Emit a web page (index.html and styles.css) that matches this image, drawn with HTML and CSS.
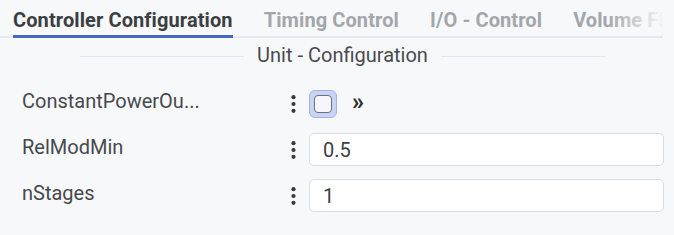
FILE: index.html
```html
<!DOCTYPE html>
<html lang="en">
<head>
<meta charset="utf-8">
<title>Controller Configuration</title>
<link rel="stylesheet" href="styles.css">
</head>
<body>
<div class="page">
  <div class="tabs-wrap">
    <nav class="tabs">
      <div class="tab active">Controller Configuration</div>
      <div class="tab">Timing Control</div>
      <div class="tab">I/O - Control</div>
      <div class="tab">Volume Flow</div>
    </nav>
    <div class="fade"></div>
  </div>

  <div class="section-title">
    <span class="line"></span>
    <span class="section-text">Unit - Configuration</span>
    <span class="line"></span>
  </div>

  <div class="rows">
    <div class="row">
      <div class="label">ConstantPowerOu...</div>
      <div class="kebab">
        <svg width="5" height="18" viewBox="0 0 5 18"><circle cx="2.5" cy="2.2" r="2.1"/><circle cx="2.5" cy="9" r="2.1"/><circle cx="2.5" cy="15.8" r="2.1"/></svg>
      </div>
      <div class="field check-field">
        <span class="check-ring"><input type="checkbox" class="check"></span>
        <span class="more">&raquo;</span>
      </div>
    </div>
    <div class="row">
      <div class="label">RelModMin</div>
      <div class="kebab">
        <svg width="5" height="18" viewBox="0 0 5 18"><circle cx="2.5" cy="2.2" r="2.1"/><circle cx="2.5" cy="9" r="2.1"/><circle cx="2.5" cy="15.8" r="2.1"/></svg>
      </div>
      <div class="field"><input class="text-input" type="text" value="0.5"></div>
    </div>
    <div class="row">
      <div class="label">nStages</div>
      <div class="kebab">
        <svg width="5" height="18" viewBox="0 0 5 18"><circle cx="2.5" cy="2.2" r="2.1"/><circle cx="2.5" cy="9" r="2.1"/><circle cx="2.5" cy="15.8" r="2.1"/></svg>
      </div>
      <div class="field"><input class="text-input" type="text" value="1"></div>
    </div>
  </div>
</div>
</body>
</html>
```
FILE: styles.css
```css
html, body {
  margin: 0;
  padding: 0;
  background: #f7f8fa;
}
body {
  font-family: Roboto, "Open Sans", sans-serif;
  color: #45484d;
}
.page {
  width: 674px;
  height: 235px;
  overflow: hidden;
}
.tabs-wrap {
  position: relative;
  width: 663px;
  overflow: hidden;
}
.tabs {
  display: flex;
  gap: 31px;
  padding: 8px 0 0 13px;
  border-bottom: 2px solid #e6e8eb;
  white-space: nowrap;
}
.tab {
  flex-shrink: 0;
  font-size: 20px;
  font-weight: 700;
  letter-spacing: 0.1px;
  line-height: 24px;
  color: #a3a6ab;
  padding-bottom: 3px;
  border-bottom: 3px solid transparent;
  margin-bottom: -2px;
}
.tab.active {
  color: #3b3e43;
  border-bottom-color: #4766c6;
}
.fade {
  position: absolute;
  top: 0;
  right: 0;
  width: 56px;
  height: 34px;
  background: linear-gradient(to right, rgba(247, 248, 250, 0), rgba(247, 248, 250, 0.95));
}
.section-title {
  display: flex;
  align-items: center;
  gap: 13px;
  margin: 5px 69px 0 80px;
}
.line {
  flex: 1;
  height: 1px;
  margin-top: 3px;
  background: #e4e6e9;
}
.section-text {
  font-size: 20px;
  line-height: 24px;
  color: #484b50;
}
.rows {
  display: flex;
  flex-direction: column;
  gap: 13px;
  margin-top: 20px;
  padding: 0 10px 0 22px;
}
.row {
  display: grid;
  grid-template-columns: 262px 19px 1fr;
  align-items: center;
  height: 33px;
}
.label {
  font-size: 20px;
  line-height: 24px;
  padding-bottom: 5px;
  color: #46494e;
  white-space: nowrap;
  overflow: hidden;
}
.kebab {
  display: flex;
  justify-content: center;
  fill: #36393e;
}
.kebab svg {
  display: block;
}
.field {
  margin-left: 6px;
}
.check-field {
  display: flex;
  align-items: center;
  gap: 15px;
}
.check-ring {
  box-sizing: border-box;
  width: 28px;
  height: 28px;
  display: grid;
  place-items: center;
  background: #c8d4f4;
  border: 1px solid #a0b3ea;
  border-radius: 6px;
}
.check {
  appearance: none;
  -webkit-appearance: none;
  box-sizing: border-box;
  margin: 0;
  width: 18px;
  height: 18px;
  background: #f6f7fa;
  border: 1.5px solid #6e7075;
  border-radius: 4px;
}
.more {
  font-size: 24px;
  font-weight: 700;
  line-height: 24px;
  color: #2a2d31;
  padding-bottom: 4px;
}
.text-input {
  box-sizing: border-box;
  display: block;
  width: 100%;
  height: 33px;
  margin: 0;
  padding: 0 13px;
  background: #ffffff;
  border: 1px solid #dadcdf;
  border-radius: 5px;
  font-family: Roboto, "Open Sans", sans-serif;
  font-size: 20px;
  color: #3e4146;
  outline: none;
}
```
